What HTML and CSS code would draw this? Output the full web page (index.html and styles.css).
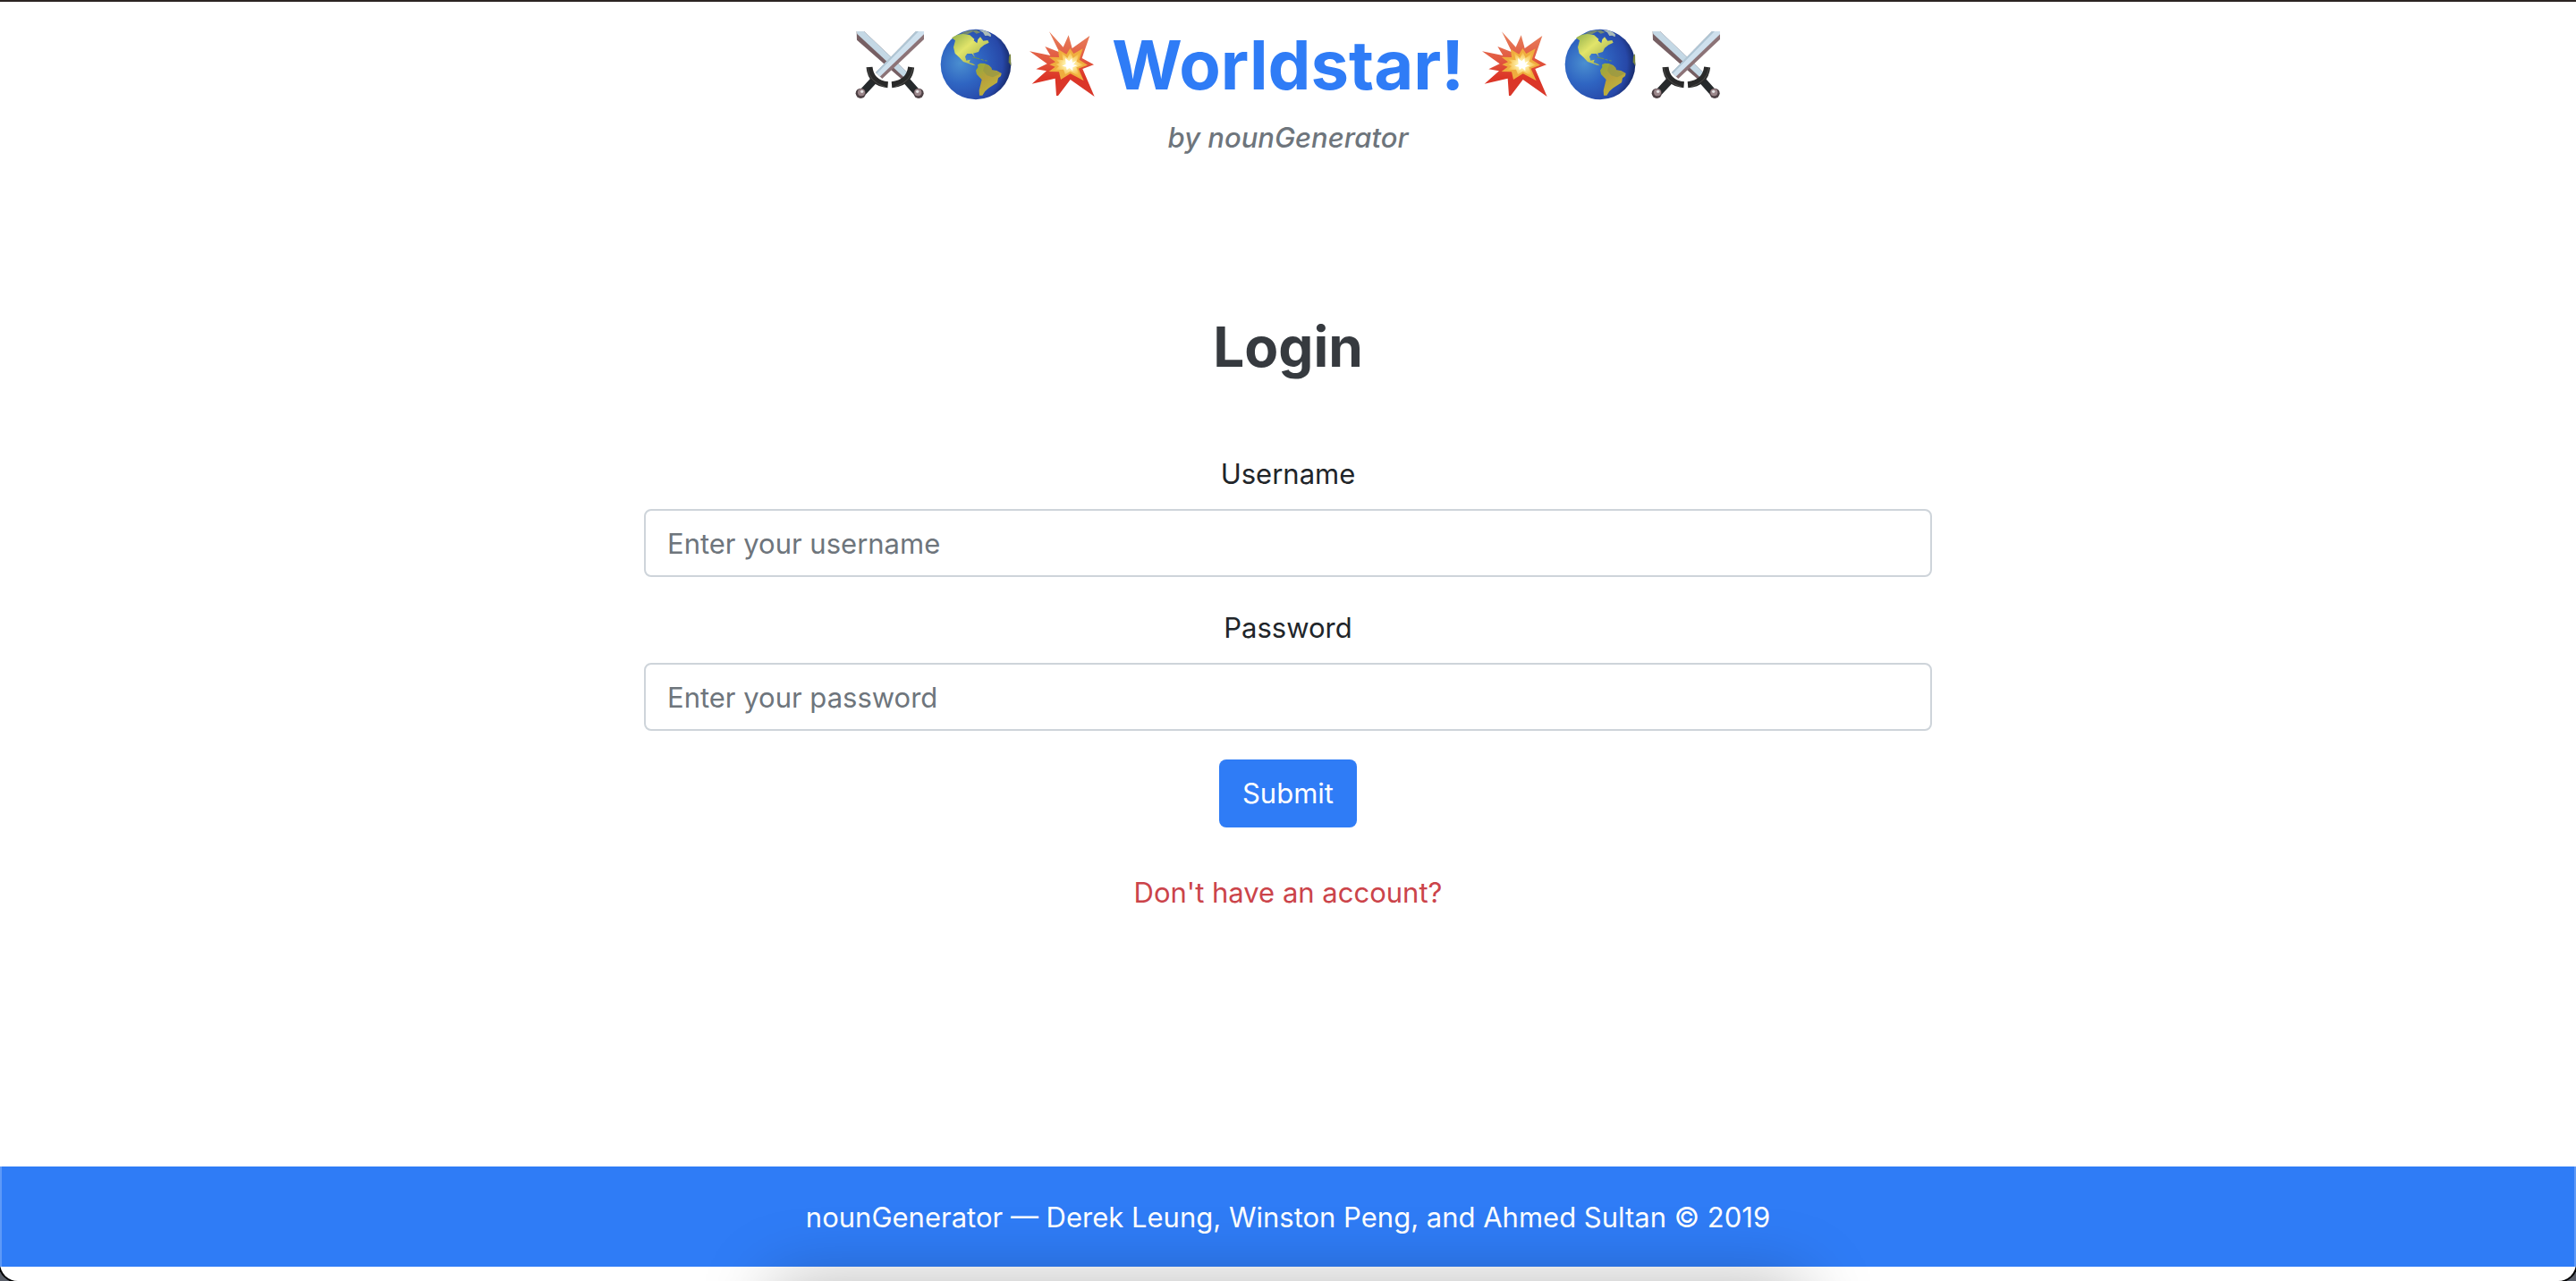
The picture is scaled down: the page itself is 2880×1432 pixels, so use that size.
FILE: index.html
```html
<!DOCTYPE html>
<html lang="en">
<head>
<meta charset="utf-8">
<meta name="viewport" content="width=device-width, initial-scale=1">
<title>Worldstar! Login</title>
<link rel="stylesheet" href="styles.css">
</head>
<body>
<svg class="defs" aria-hidden="true">
  <defs>
    <radialGradient id="ocean" cx="0.28" cy="0.48" r="0.75">
      <stop offset="0" stop-color="#4b8fd0"/><stop offset="0.4" stop-color="#2f65c2"/><stop offset="0.8" stop-color="#2748a8"/><stop offset="1" stop-color="#14245c"/>
    </radialGradient>
    <linearGradient id="land" x1="0" y1="0" x2="1" y2="1">
      <stop offset="0" stop-color="#8fae4c"/><stop offset="0.4" stop-color="#e2e56a"/><stop offset="1" stop-color="#8b9c48"/>
    </linearGradient>
    <linearGradient id="south" x1="0" y1="0" x2="0.6" y2="1">
      <stop offset="0" stop-color="#8eac3d"/><stop offset="0.5" stop-color="#b8a13a"/><stop offset="1" stop-color="#c0b640"/>
    </linearGradient>
    <linearGradient id="flame" x1="0" y1="0" x2="0" y2="1">
      <stop offset="0" stop-color="#e88460"/><stop offset="0.5" stop-color="#e0503a"/><stop offset="0.7" stop-color="#dc3527"/><stop offset="1" stop-color="#d9382b"/>
    </linearGradient>
    <radialGradient id="core" cx="0.5" cy="0.5" r="0.5">
      <stop offset="0.25" stop-color="#fff6b4"/><stop offset="1" stop-color="#f5b942"/>
    </radialGradient>
    <symbol id="swords" viewBox="0 0 240 240">
      <path d="M8 9L33 9L184 152L160 170L9 38Z" fill="#765f63"/>
      <path d="M8 9H33L184 152L168 164L10 18Z" fill="#c4d8e5"/>
      <path d="M234 9V36L94 168L72 147L207 9Z" fill="#8c7377"/>
      <path d="M234 9H207L72 147L86 161L234 19Z" fill="#cfe1ee"/>
      <path d="M207 9L72 147L76 151L216 9Z" fill="#afc5d3"/>
      <g stroke="#262a2c" fill="none">
        <path d="M67 172L29 213M173 172L209 212" stroke-width="25"/>
        <path d="M51 129Q56 183 113 188M191 129Q185 183 126 188" stroke="#292929" stroke-width="21"/>
        <path d="M45 132Q49 178 103 195M197 132Q191 178 137 195" stroke="#4b4b49" stroke-width="3"/>
      </g>
      <circle cx="22" cy="217" r="17" fill="#4e4145"/><circle cx="24" cy="214" r="12" fill="#9b868a"/><circle cx="26" cy="211" r="5" fill="#e4e3e4"/>
      <circle cx="216" cy="217" r="17" fill="#4e4145"/><circle cx="214" cy="214" r="12" fill="#9b868a"/><circle cx="212" cy="211" r="5" fill="#e4e3e4"/>
    </symbol>
    <symbol id="globe" viewBox="0 0 240 240">
      <circle cx="120" cy="120" r="118" fill="url(#ocean)"/>
      <path d="M39 31Q61 15 87 19L100 22L115 35L113 40L124 49L127 36L135 28L145 41L160 39L164 47L148 55L135 65L129 78L111 83L117 96L107 84L91 84L84 94L88 107L101 104L98 114L111 118L119 124L109 122L89 115L78 111L64 96L50 83L45 62L51 40Z" fill="url(#land)"/>
      <path d="M69 17Q91 4 123 5L136 13L122 17L111 9L94 18Z" fill="#768b70"/>
      <path d="M130 5Q158 4 171 20L170 28L160 23L151 24L144 13Z" fill="#aabcb7"/>
      <path d="M109 96L123 99L133 102M137 103L146 106M150 107L158 108" fill="none" stroke="#6d9550" stroke-width="3"/>
      <path d="M126 121L135 116L149 117L164 123L172 131L174 139L190 141L206 150L204 159L195 166L192 181L178 190L164 199L151 210L142 224L132 224L131 207L140 171L123 153L120 140L127 130Z" fill="url(#south)"/>
      <path d="M151 119L171 130L174 139L191 143L203 151L192 156L177 163L157 157L144 141Z" fill="#969945" opacity="0.7"/>
      <path d="M237 84L231 93L230 112L238 125Z" fill="#77843e"/>
    </symbol>
    <symbol id="burst" viewBox="0 0 240 240">
      <path d="M78 10L125 62L143 22L155 66L214 24L188 99L228 121L190 135L230 228L149 171L108 225L102 225L98 167L20 185L69 142L34 136L71 118L12 76L82 90L64 60L112 79Z" fill="url(#flame)"/>
      <path d="M108 69L136 86L148 66L160 84L191 67L179 104L207 122L176 134L194 175L149 151L117 171L111 145L77 144L98 128L79 121L99 112L77 95L111 96Z" fill="#efad3e"/>
      <path d="M120 81L139 99L149 79L158 99L180 82L170 110L194 122L169 130L181 161L149 143L132 154L126 137L97 139L111 126L99 120L113 115L99 103L125 106Z" fill="url(#core)"/>
      <path d="M132 99L145 109L154 99L156 114L169 108L159 121L173 123L157 130L157 142L146 132L137 139L135 128L121 125L134 119Z" fill="#fff"/>
    </symbol>
  </defs>
</svg>
<div class="window">
  <header class="masthead">
    <h1 class="brand">
      <svg class="emoji"><use href="#swords"/></svg>
      <svg class="emoji"><use href="#globe"/></svg>
      <svg class="emoji"><use href="#burst"/></svg>
      <span class="name">Worldstar!</span>
      <svg class="emoji"><use href="#burst"/></svg>
      <svg class="emoji"><use href="#globe"/></svg>
      <svg class="emoji"><use href="#swords"/></svg>
    </h1>
    <p class="byline">by nounGenerator</p>
  </header>
  <main class="login">
    <h2 class="heading">Login</h2>
    <form class="form">
      <div class="group">
        <label for="username">Username</label>
        <input class="control" id="username" type="text" placeholder="Enter your username">
      </div>
      <div class="group">
        <label for="password">Password</label>
        <input class="control" id="password" type="password" placeholder="Enter your password">
      </div>
      <button class="submit" type="submit">Submit</button>
    </form>
    <a class="signup" href="#">Don't have an account?</a>
  </main>
  <footer class="footer">nounGenerator — Derek Leung, Winston Peng, and Ahmed Sultan © 2019</footer>
  <div class="dock-shadow"></div>
</div>
</body>
</html>
```
FILE: styles.css
```css
* { box-sizing: border-box; }

html { background: #5b606a; }

body {
  margin: 0;
  font: 31px/50px Inter, "Liberation Sans", sans-serif;
  color: #212529;
  text-align: center;
}

.defs { position: absolute; width: 0; height: 0; }

.window {
  position: relative;
  display: flex;
  flex-direction: column;
  min-height: 100vh;
  padding-bottom: 16px;
  overflow: hidden;
  background: #fff;
  border-top: 2px solid #2b2422;
  border-radius: 0 0 20px 20px;
  box-shadow: 0 0 0 2px #000;
}

.masthead { padding-top: 22px; }

.brand {
  display: flex;
  justify-content: center;
  align-items: center;
  gap: 16px;
  margin: 0;
  font-size: 76px;
  line-height: 96px;
  font-weight: 700;
  color: #2f7cf6;
}

.emoji { width: 80px; height: 80px; }

.byline {
  margin: 15px 0 0;
  line-height: 38px;
  font-style: italic;
  font-weight: 500;
  color: #6e757c;
}

.login {
  display: flex;
  flex-direction: column;
  align-items: center;
  padding: 176px 0 48px;
}

.heading {
  margin: 0 0 78px;
  font-size: 62px;
  line-height: 78px;
  font-weight: 700;
  color: #363a3f;
}

.form {
  display: flex;
  flex-direction: column;
  align-items: center;
  gap: 32px;
  width: 50%;
}

.group {
  display: flex;
  flex-direction: column;
  gap: 14px;
  width: 100%;
}

.control {
  width: 100%;
  height: 76px;
  padding: 12px 24px;
  font: inherit;
  color: #495057;
  background: #fff;
  border: 2px solid #ced4da;
  border-radius: 8px;
}

.control::placeholder { color: #6e757c; opacity: 1; }

.submit {
  height: 76px;
  padding: 0 26px;
  font: inherit;
  color: #fff;
  background: #2f7cf6;
  border: 0;
  border-radius: 8px;
}

.signup {
  margin-top: 48px;
  color: #cb444a;
  text-decoration: none;
}

.footer {
  margin-top: auto;
  padding: 32px 32px 30px;
  color: #fff;
  background: #2f7cf6;
  border: solid #5e99f7;
  border-width: 0 2px;
}

.dock-shadow {
  position: absolute;
  top: 100%;
  left: 30%;
  right: 30%;
  height: 120px;
  box-shadow: 0 0 80px rgba(0, 0, 0, 0.27);
}
```
